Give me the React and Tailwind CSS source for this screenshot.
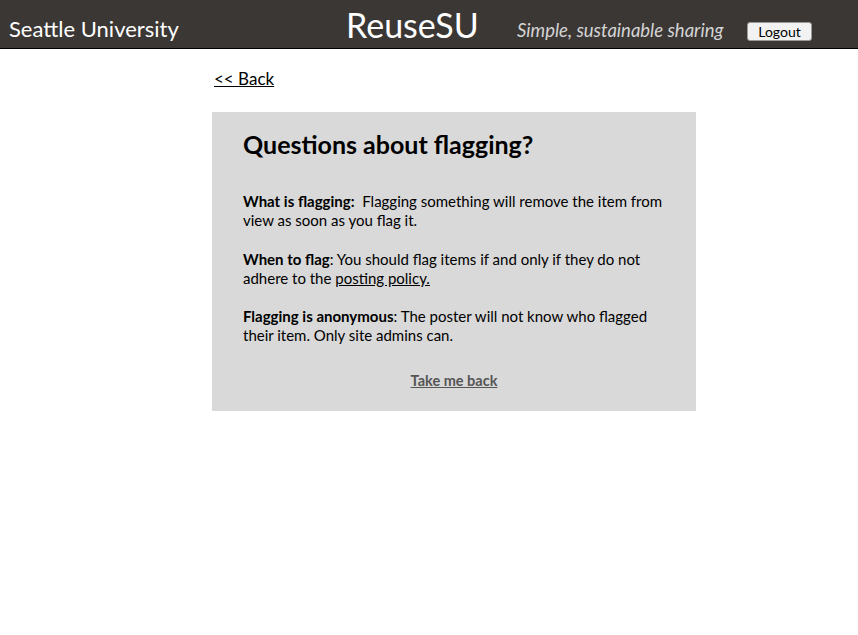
import React from "react";

const font = { fontFamily: "Lato, 'Open Sans', sans-serif" };

function Header() {
  return (
    <div className="flex h-[49px] items-center border-b border-black bg-[#3b3735] text-white">
      <div className="w-[346px] pl-[9px] pt-[8px] text-[22px]">Seattle University</div>
      <div className="w-[171px] pt-[2px] text-[34px] leading-none">ReuseSU</div>
      <div className="w-[230px] pt-[13px] text-[18.5px] italic text-[#d4d4d4]">
        Simple, sustainable sharing
      </div>
      <button className="mt-[15px] h-[19px] w-[65px] rounded-[3px] border border-[#9a9a9a] bg-[#f2f2f2] text-[14px] leading-none text-black">
        Logout
      </button>
    </div>
  );
}

function FlagInfo() {
  return (
    <div className="ml-[212px] w-[484px]">
      <a href="#" className="ml-[2px] mt-[17px] inline-block text-[17px] text-black underline">
        &lt;&lt; Back
      </a>
      <div className="mt-[20px] bg-[#d9d9d9] px-[31px] pb-[21px] pt-[16px] text-[15px] leading-[19px] text-black">
        <h1 className="text-[25px] font-bold leading-[32px]">Questions about flagging?</h1>
        <p className="mt-[32px]">
          <b>What is flagging:</b>&nbsp; Flagging something will remove the item from view as soon as you flag it.
        </p>
        <p className="mt-[20px]">
          <b>When to flag</b>: You should flag items if and only if they do not adhere to the{" "}
          <a href="#" className="underline">posting policy.</a>
        </p>
        <p className="mt-[19px]">
          <b>Flagging is anonymous</b>: The poster will not know who flagged their item. Only site admins can.
        </p>
        <div className="mt-[26px] text-center">
          <a href="#" className="text-[14.5px] font-bold text-[#555] underline">Take me back</a>
        </div>
      </div>
    </div>
  );
}

export default function App() {
  return (
    <div className="min-h-[635px] bg-white" style={font}>
      <Header />
      <FlagInfo />
    </div>
  );
}
